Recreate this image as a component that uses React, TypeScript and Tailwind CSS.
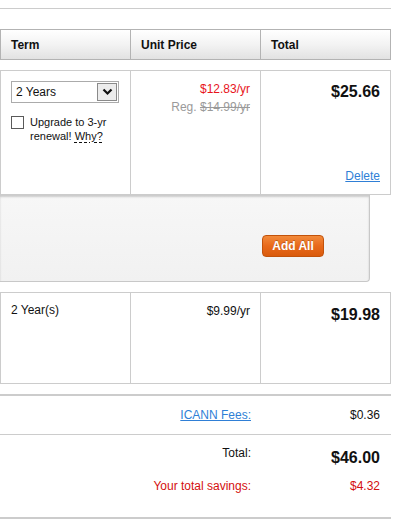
import React from 'react';

const font = { fontFamily: '"Liberation Sans", Arial, sans-serif' };

const Chevron: React.FC = () => (
  <svg width="11" height="8" viewBox="0 0 11 8">
    <path d="M1.5 1.5 L5.5 5.5 L9.5 1.5" fill="none" stroke="#111" strokeWidth="2.2" />
  </svg>
);

const App: React.FC = () => {
  return (
    <div className="w-[413px] h-[519px] bg-white overflow-hidden text-[#111]" style={font}>
      <div className="w-[391px]">
        <div className="h-[8px]" />
        <div className="border-t border-[#cccccc]" />

        {/* header */}
        <div className="mt-[20px] grid grid-cols-[130px_130px_130px] border-l border-y border-[#b3b3b3] bg-linear-to-b from-white via-[#f3f3f3] to-[#e2e2e2]">
          {['Term', 'Unit Price', 'Total'].map((h) => (
            <div key={h} className="h-[29px] pl-[10px] flex items-center border-r border-[#b3b3b3] text-[12px] font-bold">
              {h}
            </div>
          ))}
        </div>

        {/* row 1 */}
        <div className="mt-[10px] grid grid-cols-[130px_130px_130px] border-l border-y border-[#cccccc]">
          <div className="h-[123px] border-r border-[#cccccc] pt-[10px] pl-[10px]">
            <div className="w-[108px] h-[22px] border border-[#ababab] flex items-center justify-between pl-[4px] pr-[1px]">
              <span className="text-[12px]">2 Years</span>
              <div className="w-[20px] h-[18px] border border-[#8a8a8a] bg-[#ececec] flex items-center justify-center">
                <Chevron />
              </div>
            </div>
            <div className="mt-[13px] flex items-start">
              <div className="w-[13px] h-[13px] border border-[#5a5a5a] bg-white shrink-0" />
              <div className="ml-[6px] text-[11px] leading-[14px] -mt-[1px]">
                Upgrade to 3-yr renewal!{' '}
                <span className="underline decoration-dashed underline-offset-2">Why?</span>
              </div>
            </div>
          </div>
          <div className="h-[123px] border-r border-[#cccccc] pt-[9px] pr-[10px] text-right text-[12px] leading-[18px]">
            <div className="text-[#e8141b]">$12.83/yr</div>
            <div className="text-[#9a9a9a]">
              Reg. <span className="line-through">$14.99/yr</span>
            </div>
          </div>
          <div className="h-[123px] border-r border-[#cccccc] pt-[11px] pb-[11px] pr-[10px] flex flex-col items-end justify-between">
            <div className="text-[16px] font-bold leading-[20px]">$25.66</div>
            <a className="text-[12px] leading-[14px] text-[#2f7fd6] underline">Delete</a>
          </div>
        </div>

        {/* upsell panel */}
        <div className="w-[370px] h-[87px] border-r border-b border-[#c8c8c8] rounded-br-[4px] bg-linear-to-b from-[#f7f7f7] to-[#f1f1f1] shadow-[inset_0_2px_2px_rgba(0,0,0,0.18)] flex justify-end pt-[40px] pr-[45px]">
          <button className="w-[62px] h-[22px] rounded-[4px] border border-[#c2520b] bg-linear-to-b from-[#f28a3a] via-[#e8691a] to-[#d95a0c] text-white text-[12px] font-bold [text-shadow:0_-1px_0_rgba(0,0,0,0.25)]">
            Add All
          </button>
        </div>

        {/* row 2 */}
        <div className="mt-[10px] grid grid-cols-[130px_130px_130px] border-l border-y border-[#cccccc]">
          <div className="h-[90px] border-r border-[#cccccc] pt-[10px] pl-[10px] text-[12px] leading-[14px]">
            2 Year(s)
          </div>
          <div className="h-[90px] border-r border-[#cccccc] pt-[11px] pr-[10px] text-right text-[12px] leading-[14px]">
            $9.99/yr
          </div>
          <div className="h-[90px] border-r border-[#cccccc] pt-[12px] pr-[10px] text-right text-[16px] font-bold leading-[20px]">
            $19.98
          </div>
        </div>

        {/* fees */}
        <div className="mt-[10px] border-t-2 border-[#cccccc] grid grid-cols-[261px_130px] pt-[12px] pb-[12px] text-[12px] leading-[14px]">
          <div className="text-right pr-[10px]">
            <a className="text-[#2f7fd6] underline">ICANN Fees:</a>
          </div>
          <div className="text-right pr-[11px]">$0.36</div>
        </div>

        {/* totals */}
        <div className="border-t border-[#cccccc] grid grid-cols-[261px_130px] pt-[11px] pb-[24px] text-[12px] leading-[14px]">
          <div className="text-right pr-[10px]">Total:</div>
          <div className="text-right pr-[11px] text-[16px] font-bold leading-[20px] mt-[2px]">$46.00</div>
          <div className="text-right pr-[10px] mt-[11px] text-[#d40f0f]">Your total savings:</div>
          <div className="text-right pr-[11px] mt-[11px] text-[#d40f0f]">$4.32</div>
        </div>
        <div className="border-t-2 border-[#cccccc]" />
      </div>
    </div>
  );
};

export default App;
